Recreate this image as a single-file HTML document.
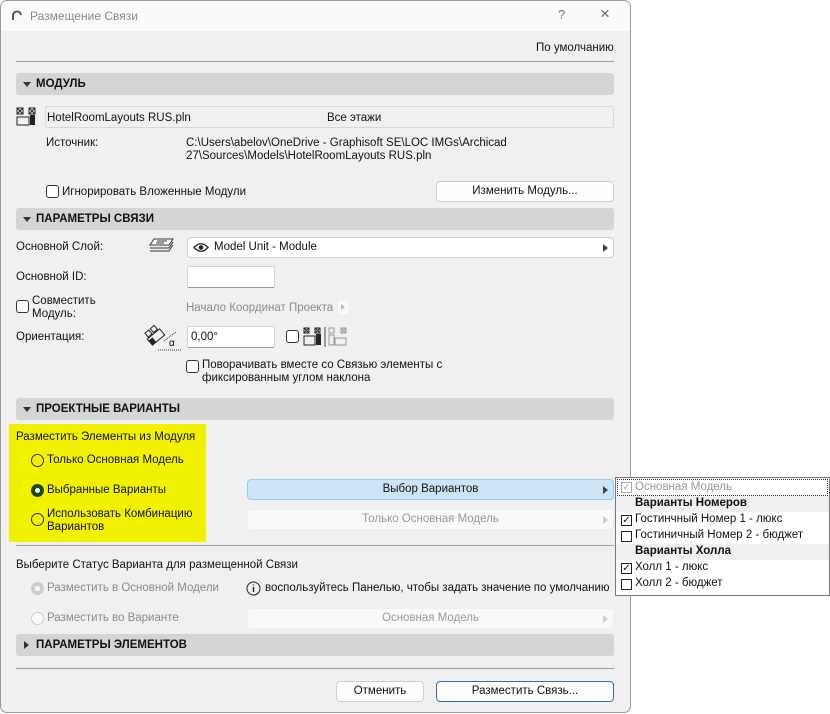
<!DOCTYPE html>
<html><head><meta charset="utf-8"><style>
*{margin:0;padding:0;box-sizing:border-box}
body{width:830px;height:714px;background:#fff;font-family:"Liberation Sans","DejaVu Sans",sans-serif;font-size:11.5px;color:#111;position:relative;overflow:hidden}
.a{position:absolute;white-space:nowrap}
#win{position:absolute;left:0;top:0;width:631px;height:713px;background:#f0f0f0;box-shadow:inset 0 0 0 1px #9a9a9a;border-radius:7px;overflow:hidden}
#tb{position:absolute;left:1px;top:1px;width:629px;height:30px;background:#fafafa;border-radius:6px 6px 0 0}
.hd{position:absolute;left:16px;width:598px;height:22px;background:#d5d5d5;border-radius:3px;font-weight:bold;font-size:11.5px}
.hd span{position:absolute;left:20px;top:5px}
.tri{position:absolute;left:7px;top:9px;width:0;height:0;border-left:4px solid transparent;border-right:4px solid transparent;border-top:5px solid #333}
.trr{position:absolute;left:8px;top:7px;width:0;height:0;border-top:4px solid transparent;border-bottom:4px solid transparent;border-left:5px solid #333}
.cb{position:absolute;width:13px;height:13px;border:1px solid #333;border-radius:3px;background:#fff}
.rd{position:absolute;width:13px;height:13px;border:1px solid #333;border-radius:50%}
.fld{position:absolute;background:#fff;border:1px solid #d4d4d4;border-bottom-color:#999;border-radius:2px}
.btn{position:absolute;background:#fdfdfd;border:1px solid #cfcfcf;border-radius:4px;text-align:center;line-height:19px}
.ar{position:absolute;right:5px;top:6px;width:0;height:0;border-top:4px solid transparent;border-bottom:4px solid transparent;border-left:5px solid #444}
.line{position:absolute;left:16px;width:598px;height:1px;background:#a0a0a0}
.g{color:#8a8a8a}
.pc{position:absolute;left:5px;width:11px;height:11px;border:1px solid #222;background:#fff;font-size:10px;line-height:9px;text-align:center}
</style></head><body>
<div id="win">
<div id="tb"></div>
<svg class="a" style="left:11px;top:10px" width="12" height="11"><path d="M2 10 V6 A4 4 0 0 1 10 5" stroke="#555" stroke-width="2" fill="none"/></svg>
<div class="a g" style="left:30px;top:9px;font-size:12px;color:#888">Размещение Связи</div>
<div class="a" style="left:558px;top:7px;color:#777;font-size:13px">?</div>
<div class="a" style="left:600px;top:4px;color:#666;font-size:17px">×</div>

<div class="a" style="left:536px;top:42px">По умолчанию</div>
<div class="line" style="top:61px"></div>

<div class="hd" style="top:73px"><div class="tri"></div><span>МОДУЛЬ</span></div>
<svg class="a" style="left:16px;top:107px" width="22" height="20"><rect x="1" y="1" width="6" height="6" fill="none" stroke="#222"/><path d="M1 1l6 6M7 1l-6 6" stroke="#222"/><rect x="13" y="1" width="6" height="6" fill="none" stroke="#222"/><path d="M13 1l6 6M19 1l-6 6" stroke="#222"/><rect x="1" y="10" width="12" height="8" fill="none" stroke="#222"/><rect x="14" y="8" width="5" height="10" fill="#222"/></svg>
<div class="fld" style="left:45px;top:106px;width:569px;height:22px;background:#f0f0f0;border-color:#d8d8d8"></div>
<div class="a" style="left:47px;top:112px">HotelRoomLayouts RUS.pln</div>
<div class="a" style="left:327px;top:112px">Все этажи</div>
<div class="a" style="left:46px;top:137px">Источник:</div>
<div class="a" style="left:186px;top:137px">C:\Users\abelov\OneDrive - Graphisoft SE\LOC IMGs\Archicad</div>
<div class="a" style="left:186px;top:150px">27\Sources\Models\HotelRoomLayouts RUS.pln</div>
<div class="cb" style="left:46px;top:185px"></div>
<div class="a" style="left:62px;top:186px">Игнорировать Вложенные Модули</div>
<div class="btn" style="left:436px;top:181px;width:178px;height:21px">Изменить Модуль...</div>

<div class="hd" style="top:208px"><div class="tri"></div><span>ПАРАМЕТРЫ СВЯЗИ</span></div>
<div class="a" style="left:16px;top:241px">Основной Слой:</div>
<svg class="a" style="left:148px;top:237px" width="27" height="18"><path d="M6 2h19l-4 6H2z" fill="#fff" stroke="#333"/><path d="M2 11h19l4-6M2 14h19l4-6" fill="none" stroke="#333"/><path d="M9 4h10M8 6h8" stroke="#333"/></svg>
<div class="btn" style="left:187px;top:237px;width:427px;height:21px;text-align:left;background:#fff"><svg style="position:absolute;left:5px;top:4px" width="16" height="11"><path d="M1 5.5Q8 -2 15 5.5Q8 13 1 5.5z" fill="none" stroke="#222" stroke-width="1.3"/><circle cx="8" cy="5.5" r="2.3" fill="#222"/></svg><span style="position:absolute;left:26px;top:0">Model Unit - Module</span><div class="ar"></div></div>
<div class="a" style="left:16px;top:271px">Основной ID:</div>
<div class="fld" style="left:187px;top:266px;width:88px;height:22px"></div>
<div class="cb" style="left:16px;top:300px"></div>
<div class="a" style="left:32px;top:295px;line-height:13px">Совместить<br>Модуль:</div>
<div class="a g" style="left:186px;top:302px">Начало Координат Проекта</div>
<div class="a" style="left:338px;top:301px;width:10px;height:13px;background:#fafafa;border-radius:2px"><div style="position:absolute;left:3px;top:3px;border-top:3.5px solid transparent;border-bottom:3.5px solid transparent;border-left:4px solid #bbb"></div></div>
<div class="a" style="left:16px;top:331px">Ориентация:</div>
<svg class="a" style="left:144px;top:323px" width="38" height="28"><g transform="rotate(-40 12 14)"><rect x="4" y="10" width="16" height="8" fill="none" stroke="#222"/><rect x="6" y="4" width="5" height="5" fill="none" stroke="#222"/><rect x="13" y="4" width="5" height="5" fill="none" stroke="#222"/><rect x="4" y="12" width="5" height="6" fill="#222"/></g><text x="25" y="23" font-size="10" font-family="Liberation Sans">α</text><path d="M14 27h23M20 18l12-9" stroke="#333" stroke-dasharray="1 1"/></svg>
<div class="fld" style="left:187px;top:326px;width:88px;height:22px"><span style="position:absolute;left:3px;top:4px">0,00°</span></div>
<div class="cb" style="left:286px;top:330px"></div>
<svg class="a" style="left:303px;top:327px" width="48" height="20"><rect x="1" y="1" width="5" height="5" fill="none" stroke="#222"/><path d="M1 1l5 5M6 1l-5 5" stroke="#222"/><rect x="12" y="1" width="5" height="5" fill="none" stroke="#222"/><path d="M12 1l5 5M17 1l-5 5" stroke="#222"/><rect x="1" y="9" width="11" height="9" fill="none" stroke="#222"/><rect x="13" y="7" width="5" height="11" fill="#222"/><path d="M22 0v20" stroke="#444"/><g stroke="#999" fill="none"><rect x="26" y="1" width="5" height="5"/><rect x="38" y="1" width="5" height="5"/><path d="M38 1l5 5M43 1l-5 5"/><rect x="26" y="8" width="5" height="10"/><rect x="32" y="11" width="11" height="7"/></g></svg>
<div class="cb" style="left:186px;top:360px"></div>
<div class="a" style="left:202px;top:359px;line-height:13px">Поворачивать вместе со Связью элементы с<br>фиксированным углом наклона</div>

<div class="hd" style="top:398px"><div class="tri"></div><span>ПРОЕКТНЫЕ ВАРИАНТЫ</span></div>
<div class="a" style="left:9px;top:424px;width:197px;height:118px;background:#f0f000"></div>
<div class="a" style="left:16px;top:431px">Разместить Элементы из Модуля</div>
<div class="rd" style="left:31px;top:454px"></div>
<div class="a" style="left:47px;top:454px">Только Основная Модель</div>
<div class="rd" style="left:31px;top:484px;border:4px solid #1a4a10;background:#fff"></div>
<div class="a" style="left:47px;top:484px">Выбранные Варианты</div>
<div class="rd" style="left:31px;top:513px"></div>
<div class="a" style="left:47px;top:508px;line-height:13px">Использовать Комбинацию<br>Вариантов</div>
<div class="btn" style="left:247px;top:479px;width:367px;height:21px;background:#cce4f7;border-color:#9cc9ee">Выбор Вариантов<div class="ar"></div></div>
<div class="btn g" style="left:247px;top:509px;width:367px;height:21px;background:#f9f9f9;border-color:#eee;color:#999">Только Основная Модель<div class="ar" style="border-left-color:#ccc"></div></div>
<div class="line" style="top:545px"></div>
<div class="a" style="left:16px;top:559px">Выберите Статус Варианта для размещенной Связи</div>
<div class="rd" style="left:31px;top:582px;border:4px solid #ccc;background:#fff"></div>
<div class="a g" style="left:47px;top:582px">Разместить в Основной Модели</div>
<svg class="a" style="left:246px;top:581px" width="15" height="15"><circle cx="7.5" cy="7.5" r="6.5" fill="none" stroke="#222"/><path d="M7.5 6v5M7.5 3.5v1" stroke="#222" stroke-width="1.4"/></svg>
<div class="a" style="left:265px;top:582px">воспользуйтесь Панелью, чтобы задать значение по умолчанию</div>
<div class="rd" style="left:31px;top:612px;border-color:#ccc;background:#fafafa"></div>
<div class="a g" style="left:47px;top:612px">Разместить во Варианте</div>
<div class="btn g" style="left:247px;top:608px;width:367px;height:21px;background:#f9f9f9;border-color:#eee;color:#999">Основная Модель<div class="ar" style="border-left-color:#ccc"></div></div>
<div class="hd" style="top:634px"><div class="trr"></div><span>ПАРАМЕТРЫ ЭЛЕМЕНТОВ</span></div>
<div class="line" style="top:668px"></div>
<div class="btn" style="left:336px;top:681px;width:88px;height:21px">Отменить</div>
<div class="btn" style="left:436px;top:681px;width:178px;height:21px;border-color:#2a6fc0">Разместить Связь...</div>
</div>

<div class="a" style="left:615px;top:477px;width:215px;height:119px;background:#fff;border:1px solid #777">
<div class="a" style="left:1px;top:1px;width:211px;height:17px;border:1px dotted #333"></div>
<div class="pc" style="top:4px;border-color:#aaa;color:#aaa">✓</div>
<div class="a g" style="left:19px;top:3px;color:#999">Основная Модель</div>
<div class="a" style="left:0;top:18px;width:213px;height:16px;background:#f0f0f0"></div>
<div class="a" style="left:19px;top:19px;font-weight:bold">Варианты Номеров</div>
<div class="pc" style="top:37px">✓</div><div class="a" style="left:19px;top:35px">Гостинчный Номер 1 - люкс</div>
<div class="pc" style="top:53px"></div><div class="a" style="left:19px;top:51px">Гостиничный Номер 2 - бюджет</div>
<div class="a" style="left:0;top:66px;width:213px;height:16px;background:#f0f0f0"></div>
<div class="a" style="left:19px;top:67px;font-weight:bold">Варианты Холла</div>
<div class="pc" style="top:85px">✓</div><div class="a" style="left:19px;top:83px">Холл 1 - люкс</div>
<div class="pc" style="top:101px"></div><div class="a" style="left:19px;top:99px">Холл 2 - бюджет</div>
</div>
</body></html>
